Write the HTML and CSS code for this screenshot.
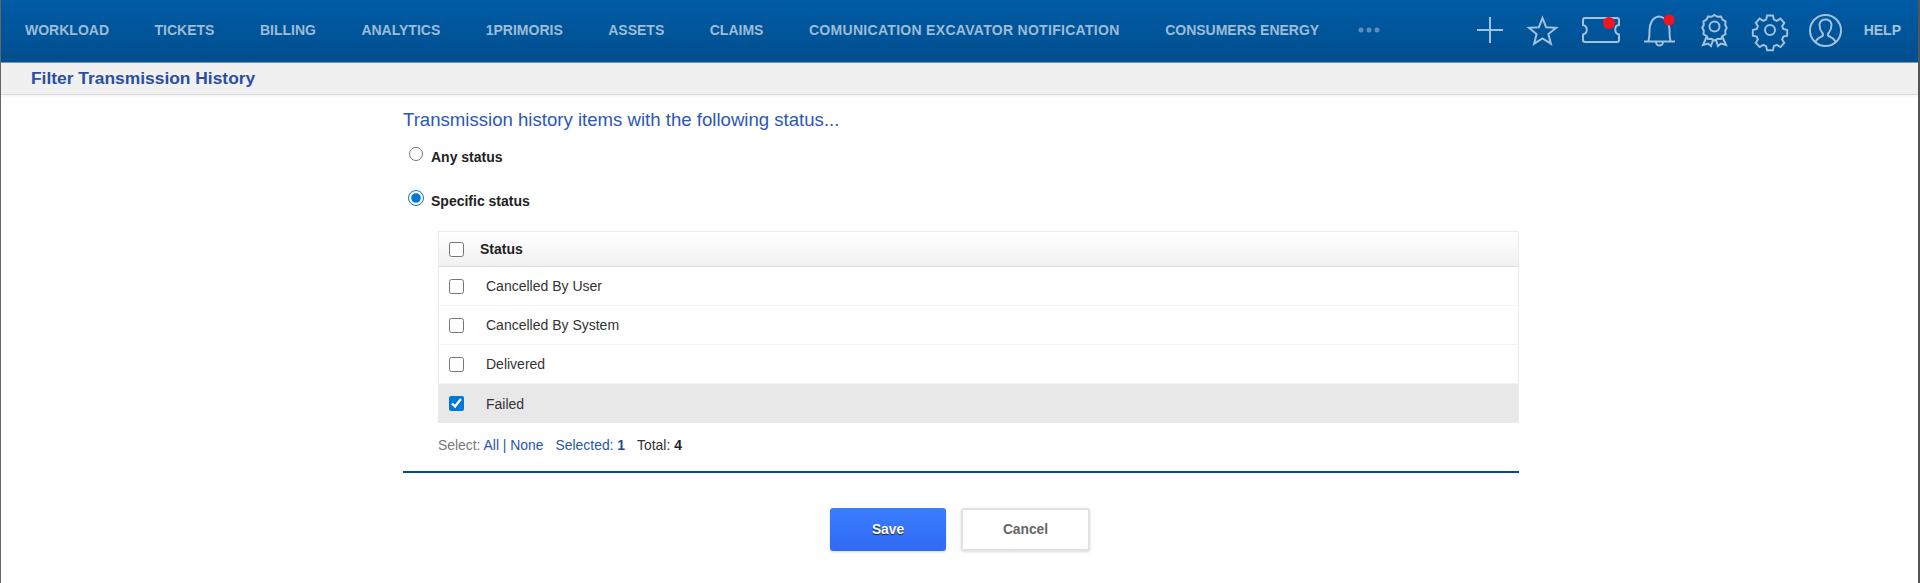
FILE: index.html
```html
<!DOCTYPE html>
<html lang="en">
<head>
<meta charset="utf-8">
<title>Filter Transmission History</title>
<link rel="stylesheet" href="styles.css">
</head>
<body>
<div class="page">
  <header class="topbar">
    <nav class="nav">
      <a>WORKLOAD</a><a>TICKETS</a><a>BILLING</a><a>ANALYTICS</a><a>1PRIMORIS</a><a>ASSETS</a><a>CLAIMS</a><a class="wide">COMUNICATION EXCAVATOR NOTIFICATION</a><a>CONSUMERS ENERGY</a>
      <svg class="more" width="22" height="6" viewBox="0 0 22 6"><circle cx="3" cy="3" r="2.5"/><circle cx="11" cy="3" r="2.5"/><circle cx="19" cy="3" r="2.5"/></svg>
    </nav>
    <div class="tools">
      <svg class="ic ic-plus" width="26" height="26" viewBox="0 0 26 26"><path d="M13 0V26M0 13H26"/></svg>
      <svg class="ic ic-star" width="31" height="29" viewBox="0 0 31 29"><path d="M15.5 2l3.6 9.2 10 .6-7.7 6.3 2.5 9.6-8.4-5.3-8.4 5.3 2.5-9.6-7.7-6.3 10-.6z"/></svg>
      <svg class="ic ic-ticket" width="38" height="26" viewBox="0 0 38 26"><path d="M3 1H35a2 2 0 0 1 2 2V8c-5 .5-5 8.500 0 9.500V23a2 2 0 0 1-2 2H3a2 2 0 0 1-2-2V17.500c5-1 5-8.500 0-9.500V3a2 2 0 0 1 2-2z"/><circle class="dot" cx="27" cy="6" r="6"/></svg>
      <svg class="ic ic-bell" width="33" height="31" viewBox="0 0 33 31"><path d="M1 26.500H32M5 26.500c1.500-2 1.500-5 1.500-11C6.500 8 10 2 16 1.500 22 2 26.500 8 26.500 15.500c0 6 0 9 1.500 11M13 27a3.500 3.500 0 0 0 7 0"/><circle class="dot" cx="26" cy="5" r="5.500"/></svg>
      <svg class="ic ic-ribbon" width="25" height="33" viewBox="0 0 25 33"><path d="M12.500 1l3 1.800 3.500-.2 1.500 3 3 1.700-.3 3.500 1.500 3-1.500 3 .3 3.500-3 1.700-1.500 3-3.500-.2-3 1.800-3-1.800-3.500.2-1.500-3-3-1.700.3-3.500-1.500-3 1.500-3-.3-3.500 3-1.700 1.500-3 3.500.2z"/><circle cx="12.500" cy="12.500" r="5"/><path d="M5 22L1 31l5-1.500L9 32l2-6M20 22l4 9-5-1.500L16 32l-2-6"/></svg>
      <svg class="ic ic-gear" width="32" height="32" viewBox="0 0 32 32"><path d="M13 1h6l1 4.200 3 1.300 3.700-2.300 4 4.300-2.200 3.500 1.200 3 4 1v5.800l-4 1-1.200 3 2.200 3.500-4 4.300-3.700-2.300-3 1.300-1 4.200h-6l-1-4.200-3-1.300-3.700 2.300-4-4.300 2.200-3.500-1.200-3-4-1v-5.800l4-1 1.200-3-2.200-3.500 4-4.300 3.700 2.300 3-1.300z" transform="translate(.5 .5) scale(.97)"/><circle cx="16" cy="16" r="5"/></svg>
      <svg class="ic ic-user" width="33" height="33" viewBox="0 0 33 33"><circle cx="16.500" cy="16.500" r="15.500"/><path d="M6.500 28.500c.5-4 4-5 7-6.500 1-1 .5-2.500-.5-3.500-2-2.500-2.500-5-2.500-8 .5-3 3-5 6-5s5.500 2 6 5c0 3-.5 5.500-2.500 8-1 1-1.500 2.500-.5 3.500 3 1.500 6.500 2.500 7 6.500"/></svg>
      <a class="help">HELP</a>
    </div>
  </header>
  <div class="titlebar"><h1>Filter Transmission History</h1></div>
  <main class="content">
    <h2>Transmission history items with the following status...</h2>
    <label class="choice choice-any"><input type="radio" name="st"><span>Any status</span></label>
    <label class="choice choice-specific"><input type="radio" name="st" checked><span>Specific status</span></label>
    <div class="grid">
      <div class="grid-head"><input type="checkbox"><span>Status</span></div>
      <div class="grid-row"><input type="checkbox"><span>Cancelled By User</span></div>
      <div class="grid-row"><input type="checkbox"><span>Cancelled By System</span></div>
      <div class="grid-row"><input type="checkbox"><span>Delivered</span></div>
      <div class="grid-row is-selected"><input type="checkbox" checked><span>Failed</span></div>
    </div>
    <p class="summary"><span class="muted">Select:</span> <a>All</a> <a>|</a> <a>None</a><a class="sel">Selected:</a> <b class="sel-n">1</b><span class="total">Total:</span> <b>4</b></p>
    <div class="actions">
      <button class="btn btn-save" type="button">Save</button>
      <button class="btn btn-cancel" type="button">Cancel</button>
    </div>
  </main>
</div>
</body>
</html>
```
FILE: styles.css
```css
* { box-sizing: border-box; }
html, body { margin: 0; height: 100%; background: #fff; }
body { font-family: "Liberation Sans", Arial, sans-serif; color: #333; overflow: hidden; }
.page { min-height: 583px; border-left: 1px solid #666; border-right: 2px solid #555; }

.topbar {
  height: 63px;
  display: flex;
  align-items: center;
  padding: 0 17px 2px 24px;
  background: linear-gradient(#005ba5, #004f8f);
  border-bottom: 1px solid #6f9cc4;
}
.nav { display: flex; align-items: center; gap: 45.500px; margin-top: -1px; }
.nav a { font-size: 14px; font-weight: 700; color: #9dbcd7; white-space: nowrap; }
.nav a.wide { letter-spacing: .3px; }
.more { fill: #5f8db8; margin-left: -7px; }
.tools { display: flex; align-items: center; margin-left: auto; }
.ic { display: block; overflow: visible; fill: none; stroke: #a3c1da; stroke-width: 2; }
.ic .dot { fill: #f3141f; stroke: none; }
.ic-plus, .ic-star { margin-right: 24px; }
.ic-ticket { margin-right: 23px; }
.ic-bell { margin-right: 26px; }
.ic-ribbon { margin-right: 27px; }
.ic-gear { margin-right: 23px; }
.ic-user { margin-right: 22px; }
.help { font-size: 14px; font-weight: 700; color: #a3c1da; }

.titlebar {
  height: 32px;
  display: flex;
  align-items: center;
  padding-left: 30px;
  background: #f0f0f0;
  border-bottom: 1px solid #d9d9d9;
  box-shadow: 0 1px 3px rgba(0,0,0,.06);
}
h1 { margin: 0; font-size: 17.400px; font-weight: 700; color: #2a4ea3; }

.content { width: 1116px; margin: 0 0 0 402px; padding-top: 14px; }
h2 { margin: 0; font-size: 18.600px; line-height: 22px; font-weight: 400; color: #2b58b8; }

.choice { display: flex; align-items: center; font-size: 14px; font-weight: 700; color: #222; }
.choice input { margin: 0; accent-color: #0078d7; position: relative; top: -3px; }
.choice-any { height: 20px; margin-top: 16px; padding-left: 6px; }
.choice-any input { width: 14px; height: 14px; margin-right: 8px; }
.choice-specific { height: 20px; margin-top: 24px; padding-left: 5px; }
.choice-specific input { width: 16px; height: 16px; margin-right: 7px; }

.grid { margin: 20px 0 0 35px; border: 1px solid #ececec; border-bottom: 0; }
.grid input { width: 15px; height: 15px; margin: 0; accent-color: #0078d7; }
.grid-head, .grid-row { display: flex; align-items: center; padding-left: 10px; }
.grid-head {
  height: 35px;
  font-size: 14px;
  font-weight: 700;
  color: #222;
  background: linear-gradient(#fff, #f1f1f1);
  border-bottom: 1px solid #ddd;
}
.grid-head span { margin-left: 16px; }
.grid-row { height: 39px; font-size: 14px; color: #333; border-bottom: 1px solid #f4f4f4; }
.grid-row span { margin-left: 22px; }
.grid-row.is-selected { background: #e8e8e8; border-bottom: 0; }

.summary {
  margin: 0 0 0 35px;
  height: 48px;
  padding-top: 14px;
  font-size: 13.900px;
  line-height: 16px;
  color: #2a55a8;
}
.muted { color: #777; }
.sel { margin-left: 12px; }
.sel-n { color: #1f4c9a; }
.total { margin-left: 12px; color: #333; }
.summary b:last-child { color: #222; }

.actions {
  display: flex;
  justify-content: center;
  gap: 15px;
  border-top: 2px solid #004a93;
  padding: 35px 2px 0 0;
}
.btn {
  height: 43px;
  border-radius: 3px;
  font: 700 13.800px "Liberation Sans", Arial, sans-serif;
  box-shadow: 0 1px 3px rgba(0,0,0,.15);
}
.btn-save {
  width: 116px;
  color: #fff;
  border: 0;
  background: linear-gradient(#3b7dff, #2f6af3);
  text-shadow: 0 1px 1px #222;
}
.btn-cancel { width: 129px; color: #666; background: #fff; border: 2px solid #e2e2e2; }
```
